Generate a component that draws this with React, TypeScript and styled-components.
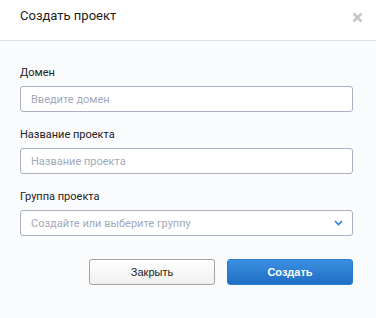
import React from 'react'
import styled, { createGlobalStyle } from 'styled-components'

const GlobalStyle = createGlobalStyle`
  html, body {
    margin: 0;
    padding: 0;
    background: #fafbfd;
  }
  * {
    box-sizing: border-box;
  }
`

const Modal = styled.div`
  width: 376px;
  height: 318px;
  display: flex;
  flex-direction: column;
  background: #fafbfd;
  font-family: Roboto, 'Noto Sans', sans-serif;
  color: #222;
`

const Header = styled.div`
  height: 41px;
  display: flex;
  flex-direction: row;
  justify-content: space-between;
  align-items: flex-start;
  padding: 8px 13px 0 20px;
  background: #fff;
  border-bottom: 1px solid #dde1ea;
`

const Title = styled.h2`
  margin: 0;
  font-size: 13px;
  font-weight: 400;
  line-height: 15px;
  color: #1d1d1f;
`

const Close = styled.button`
  width: 12px;
  height: 12px;
  margin-top: 3px;
  padding: 0;
  border: none;
  background: none;
  cursor: pointer;
  display: flex;
  align-items: center;
  justify-content: center;
`

const Body = styled.div`
  display: flex;
  flex-direction: column;
  gap: 16px;
  padding: 25px 23px 0 20px;
`

const Field = styled.label`
  display: flex;
  flex-direction: column;
  gap: 6px;
`

const Label = styled.span`
  font-size: 11px;
  line-height: 14px;
  color: #202124;
`

const Input = styled.input`
  width: 100%;
  height: 26px;
  padding: 0 10px;
  border: 1px solid #a9b0bf;
  border-radius: 3px;
  background: #fff;
  font-family: Roboto, 'Noto Sans', sans-serif;
  font-size: 11px;
  color: #222;
  outline: none;

  &::placeholder {
    color: #a2a9b8;
  }
`

const SelectBox = styled.div`
  height: 26px;
  display: flex;
  align-items: center;
  justify-content: space-between;
  padding: 0 9px 0 10px;
  border: 1px solid #a9b0bf;
  border-radius: 3px;
  background: #fff;
  font-size: 11px;
  color: #a2a9b8;
  cursor: pointer;
`

const Footer = styled.div`
  display: flex;
  flex-direction: row;
  justify-content: flex-end;
  gap: 12px;
  padding: 23px 23px 0 20px;
`

const Button = styled.button<{ primary?: boolean }>`
  width: 126px;
  height: 26px;
  border-radius: 3px;
  font-family: 'Liberation Sans', Arial, sans-serif;
  font-size: 11px;
  font-weight: ${props => (props.primary ? 700 : 400)};
  cursor: pointer;
  color: ${props => (props.primary ? '#fff' : '#222')};
  border: 1px solid ${props => (props.primary ? '#2a7bd2' : '#a3a3a3')};
  background: ${props =>
    props.primary
      ? 'linear-gradient(180deg, #3b8fe0 0%, #1f6ec4 100%)'
      : 'linear-gradient(180deg, #ffffff 0%, #efefef 100%)'};
`

export default function App() {
  return (
    <>
      <GlobalStyle />
      <Modal>
        <Header>
          <Title>Создать проект</Title>
          <Close aria-label="close">
            <svg width="11" height="11" viewBox="0 0 11 11">
              <path d="M1.5 1.5L9.5 9.5M9.5 1.5L1.5 9.5" stroke="#c6c6c6" strokeWidth="2.6" />
            </svg>
          </Close>
        </Header>
        <Body>
          <Field>
            <Label>Домен</Label>
            <Input placeholder="Введите домен" />
          </Field>
          <Field>
            <Label>Название проекта</Label>
            <Input placeholder="Название проекта" />
          </Field>
          <Field as="div">
            <Label>Группа проекта</Label>
            <SelectBox>
              <span>Создайте или выберите группу</span>
              <svg width="9" height="6" viewBox="0 0 9 6">
                <path d="M1 1L4.5 4.5L8 1" stroke="#2f7fd6" strokeWidth="1.6" fill="none" />
              </svg>
            </SelectBox>
          </Field>
        </Body>
        <Footer>
          <Button>Закрыть</Button>
          <Button primary>Создать</Button>
        </Footer>
      </Modal>
    </>
  )
}
